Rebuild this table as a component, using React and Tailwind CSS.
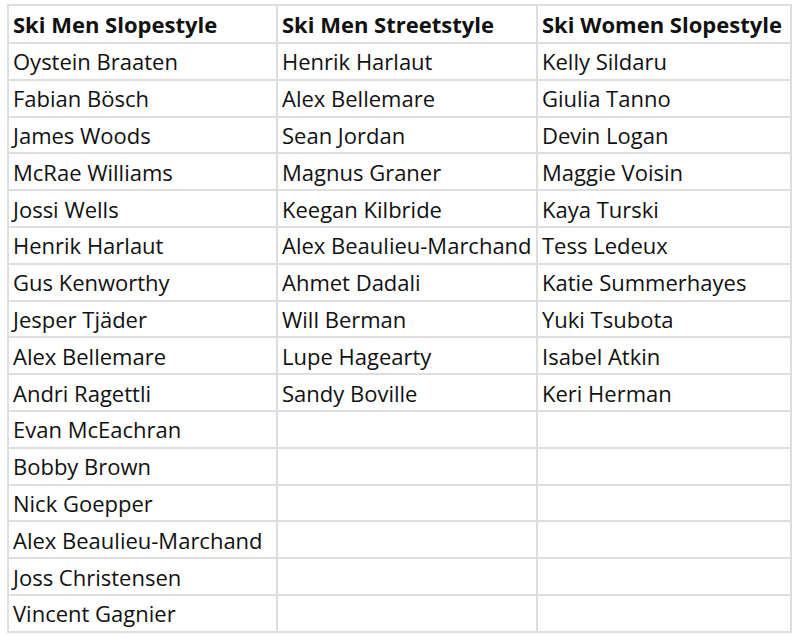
import React from 'react';

const columns = [
  {
    title: 'Ski Men Slopestyle',
    width: 'w-[269px]',
    names: [
      'Oystein Braaten',
      'Fabian Bösch',
      'James Woods',
      'McRae Williams',
      'Jossi Wells',
      'Henrik Harlaut',
      'Gus Kenworthy',
      'Jesper Tjäder',
      'Alex Bellemare',
      'Andri Ragettli',
      'Evan McEachran',
      'Bobby Brown',
      'Nick Goepper',
      'Alex Beaulieu-Marchand',
      'Joss Christensen',
      'Vincent Gagnier',
    ],
  },
  {
    title: 'Ski Men Streetstyle',
    width: 'w-[260px]',
    names: [
      'Henrik Harlaut',
      'Alex Bellemare',
      'Sean Jordan',
      'Magnus Graner',
      'Keegan Kilbride',
      'Alex Beaulieu-Marchand',
      'Ahmet Dadali',
      'Will Berman',
      'Lupe Hagearty',
      'Sandy Boville',
    ],
  },
  {
    title: 'Ski Women Slopestyle',
    width: 'w-[254px]',
    names: [
      'Kelly Sildaru',
      'Giulia Tanno',
      'Devin Logan',
      'Maggie Voisin',
      'Kaya Turski',
      'Tess Ledeux',
      'Katie Summerhayes',
      'Yuki Tsubota',
      'Isabel Atkin',
      'Keri Herman',
    ],
  },
];

const rowCount = 16;

export default function App() {
  return (
    <div className="bg-white w-[800px] h-[640px] pt-[4px] pl-[7px] font-['Open_Sans',sans-serif] text-[#111] text-[22px]">
      <table className="border-collapse border-2 border-[#dedede]">
        <thead>
          <tr>
            {columns.map((col) => (
              <th
                key={col.title}
                className={`${col.width} h-[38px] border-2 border-[#dedede] px-[4px] text-left font-bold leading-none whitespace-nowrap`}
              >
                {col.title}
              </th>
            ))}
          </tr>
        </thead>
        <tbody>
          {Array.from({ length: rowCount }).map((_, i) => (
            <tr key={i}>
              {columns.map((col) => (
                <td
                  key={col.title}
                  className="h-[36.8px] border-2 border-[#dedede] px-[4px] leading-none whitespace-nowrap"
                >
                  {col.names[i] || ''}
                </td>
              ))}
            </tr>
          ))}
        </tbody>
      </table>
    </div>
  );
}
